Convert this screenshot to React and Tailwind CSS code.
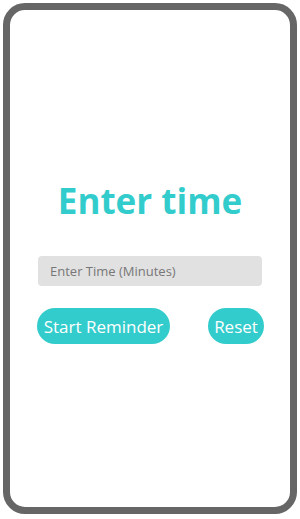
export default function App() {
  return (
    <div className="w-[300px] h-[519px] bg-white p-[3px]" style={{ fontFamily: '"Open Sans", "Noto Sans", sans-serif' }}>
      <div className="h-[511px] border-[7px] border-[#666666] rounded-[22px] bg-white flex flex-col px-[28px] pt-[164px]">
        <h1 className="h-[52px] flex items-center justify-center text-[35px] font-bold text-[#33cccc] leading-none">
          Enter time
        </h1>
        <input
          type="text"
          placeholder="Enter Time (Minutes)"
          className="mt-[30px] h-[30px] w-full rounded-[4px] bg-[#e1e1e1] px-3 text-[13px] text-[#555] placeholder:text-[#777] outline-none"
        />
        <div className="mt-[22px] flex items-center justify-between -ml-[1px]">
          <button className="h-[36px] w-[133px] rounded-full bg-[#33cccc] text-[17px] text-white leading-none">
            Start Reminder
          </button>
          <button className="h-[36px] w-[56px] rounded-full bg-[#33cccc] text-[17px] text-white leading-none -mr-[2px]">
            Reset
          </button>
        </div>
      </div>
    </div>
  );
}
